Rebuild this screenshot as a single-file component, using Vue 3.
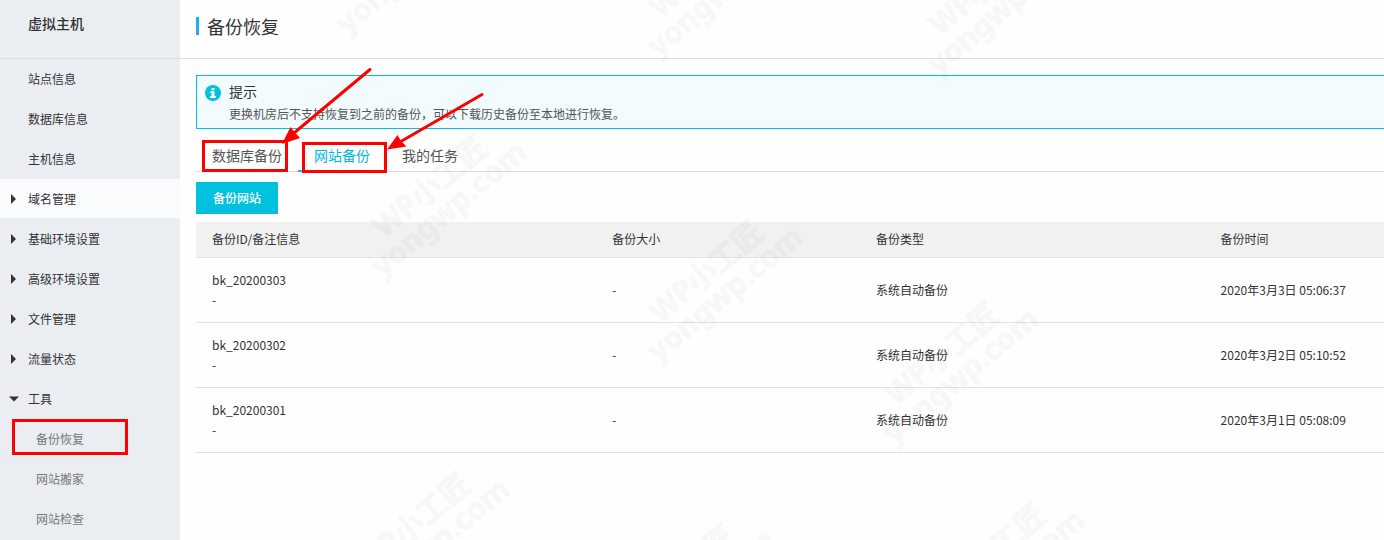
<script setup>
const siteLinks = ['站点信息', '数据库信息', '主机信息']
const groups = [
  { name: '域名管理', active: true, open: false, children: [] },
  { name: '基础环境设置', open: false, children: [] },
  { name: '高级环境设置', open: false, children: [] },
  { name: '文件管理', open: false, children: [] },
  { name: '流量状态', open: false, children: [] },
  { name: '工具', open: true, children: ['备份恢复', '网站搬家', '网站检查'] },
]
const tabs = ['数据库备份', '网站备份', '我的任务']
const currentTab = '网站备份'
const columns = ['备份ID/备注信息', '备份大小', '备份类型', '备份时间']
const backups = [
  { id: 'bk_20200303', note: '-', size: '-', type: '系统自动备份', time: '2020年3月3日 05:06:37' },
  { id: 'bk_20200302', note: '-', size: '-', type: '系统自动备份', time: '2020年3月2日 05:10:52' },
  { id: 'bk_20200301', note: '-', size: '-', type: '系统自动备份', time: '2020年3月1日 05:08:09' },
]
const watermarks = [
  [337, 22], [648, 45], [928, 63],
  [372, 265], [648, 350], [884, 432],
  [355, 602], [620, 654], [930, 633],
]
</script>

<template>
  <div class="page">
    <aside class="sidebar">
      <h2 class="product">虚拟主机</h2>
      <nav>
        <a v-for="link in siteLinks" :key="link" href="#" class="item">{{ link }}</a>
        <template v-for="group in groups" :key="group.name">
          <a href="#" class="item" :class="{ active: group.active }">
            <svg class="caret" width="12" height="12" viewBox="0 0 12 12" aria-hidden="true">
              <path v-if="group.open" d="M1 3.500h10l-5 5z" />
              <path v-else d="M3 1v10l5-5z" />
            </svg>
            {{ group.name }}
          </a>
          <a v-for="child in group.children" :key="child" href="#" class="item child">{{ child }}</a>
        </template>
      </nav>
    </aside>

    <main class="main">
      <header class="header">
        <h1 class="title">备份恢复</h1>
      </header>
      <div class="content">
        <section class="notice">
          <svg class="info" width="16" height="16" viewBox="0 0 16 16" aria-hidden="true">
            <circle cx="8" cy="8" r="8" fill="#00c1de" />
            <path d="M6.500 3h3v2.300h-3zM5.200 6.300h4.300v4.700h1.300v2h-5.600v-2h1.300v-2.900h-1.300z" fill="#fff" />
          </svg>
          <div>
            <h3 class="notice-title">提示</h3>
            <p class="notice-text">更换机房后不支持恢复到之前的备份，可以下载历史备份至本地进行恢复。</p>
          </div>
        </section>

        <div class="tabs" role="tablist">
          <button
            v-for="tab in tabs"
            :key="tab"
            type="button"
            role="tab"
            class="tab"
            :class="{ current: tab === currentTab }"
            :aria-selected="tab === currentTab"
          >{{ tab }}</button>
        </div>

        <button type="button" class="primary">备份网站</button>

        <table class="table">
          <colgroup>
            <col class="col-id"><col class="col-size"><col class="col-type"><col>
          </colgroup>
          <thead>
            <tr><th v-for="column in columns" :key="column" scope="col">{{ column }}</th></tr>
          </thead>
          <tbody>
            <tr v-for="row in backups" :key="row.id">
              <td>{{ row.id }}<br>{{ row.note }}</td>
              <td>{{ row.size }}</td>
              <td>{{ row.type }}</td>
              <td>{{ row.time }}</td>
            </tr>
          </tbody>
        </table>
      </div>
    </main>

    <svg class="overlay" aria-hidden="true">
      <g class="watermark">
        <g v-for="([x, y], i) in watermarks" :key="i" :transform="`translate(${x} ${y}) rotate(-40)`">
          <text x="95" y="-12">WP小工匠</text>
          <text x="95" y="17">yongwp.com</text>
        </g>
      </g>
      <g class="frames">
        <rect x="203.500" y="141.500" width="83" height="29" />
        <rect x="303.500" y="143.500" width="82" height="28" />
        <rect x="13.500" y="420.500" width="113" height="33" />
        <path d="M370 69.500L294 133M482 94.500L400 142" />
      </g>
      <g class="heads">
        <path d="M282 144L290.500 127L294.500 132L300 138z" />
        <path d="M387 149.500L397.500 135L401 141L406.500 146.500z" />
      </g>
    </svg>
  </div>
</template>

<style>
body {
  margin: 0;
  background: #fefefe;
}
</style>

<style scoped>
.page {
  position: relative;
  display: flex;
  height: 100vh;
  overflow: hidden;
  font: 12px/20px "Noto Sans CJK SC", sans-serif;
  color: #333;
}
.sidebar {
  flex: none;
  width: 180px;
  background: #eaedf1;
}
.product {
  box-sizing: border-box;
  height: 59px;
  margin: 0;
  padding: 13px 28px 0;
  border-bottom: 1px solid #d9dce0;
  font-size: 14px;
  line-height: 20px;
  font-weight: 500;
}
.item {
  box-sizing: border-box;
  position: relative;
  display: block;
  height: 40px;
  padding-left: 28px;
  line-height: 40px;
  color: #333;
  text-decoration: none;
}
.item.active {
  background: #fafbfc;
  border-bottom: 1px solid #eaedf1;
}
.child {
  padding-left: 36px;
  color: #777;
}
.caret {
  position: absolute;
  left: 8px;
  top: 14px;
  fill: #333;
}
.main {
  flex: 1;
  min-width: 0;
}
.header {
  box-sizing: border-box;
  height: 59px;
  padding: 17px 16px 0;
  border-bottom: 1px solid #ddd;
}
.title {
  display: flex;
  align-items: center;
  gap: 8px;
  height: 18px;
  margin: 0;
  font-size: 18px;
  font-weight: 400;
}
.title::before {
  content: "";
  width: 3px;
  height: 18px;
  background: linear-gradient(#00c1de, #3c9dff);
}
.content {
  padding: 16px 0 0 16px;
}
.notice {
  box-sizing: border-box;
  display: flex;
  gap: 8px;
  height: 54px;
  padding: 5px 8px;
  border: 1px solid #00c1de;
  border-right: 0;
  background: #f2fbfe;
}
.info {
  flex: none;
  margin-top: 4px;
}
.notice-title {
  margin: 0;
  font-size: 14px;
  line-height: 20px;
  font-weight: 400;
}
.notice-text {
  margin: 3px 0 0;
  color: #555;
}
.tabs {
  display: flex;
  margin-top: 12px;
  border-bottom: 1px solid #ddd;
}
.tab {
  height: 31px;
  margin-bottom: -1px;
  padding: 0 16px 2px;
  border: 0;
  border-bottom: 2px solid transparent;
  background: none;
  font: inherit;
  font-size: 14px;
  color: #555;
}
.tab.current {
  border-color: #00c1de;
  color: #00b7dd;
}
.primary {
  display: block;
  height: 32px;
  margin: 10px 0 8px;
  padding: 0 17px;
  border: 0;
  background: #00c1de;
  font: inherit;
  font-weight: 500;
  color: #fff;
}
.table {
  width: 100%;
  table-layout: fixed;
  border-collapse: separate;
  border-spacing: 0;
}
.col-id { width: 33.7%; }
.col-size { width: 22.2%; }
.col-type { width: 29%; }
.table th,
.table td {
  padding: 12px 16px;
  border-bottom: 1px solid #e3e3e3;
  text-align: left;
  font-weight: 400;
}
.table th {
  padding: 7px 16px 8px;
  background: #f1f1f1;
}
.overlay {
  position: absolute;
  inset: 0;
  width: 100%;
  height: 100%;
  pointer-events: none;
}
.watermark {
  opacity: 0.03;
  fill: #000;
  stroke: #000;
  stroke-width: 1px;
  font-family: "Noto Sans", "Noto Sans CJK SC", sans-serif;
  font-size: 30px;
  font-weight: 700;
  text-anchor: middle;
}
.frames {
  fill: none;
  stroke: #f00;
  stroke-width: 3px;
  stroke-linecap: round;
}
.heads {
  fill: #f00;
}
</style>
